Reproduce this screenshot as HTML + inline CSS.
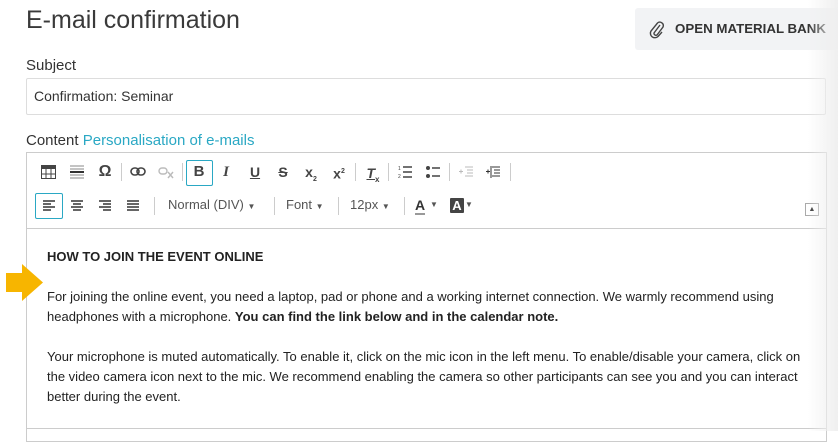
<!DOCTYPE html>
<html><head><meta charset="utf-8"><style>
*{margin:0;padding:0;box-sizing:border-box}
body{width:838px;height:431px;overflow:hidden;background:#fff;font-family:"Liberation Sans",sans-serif;color:#333;position:relative}
.a{position:absolute;white-space:nowrap}
.fade{position:absolute;right:0;top:0;width:30px;height:431px;background:linear-gradient(to right,rgba(240,240,240,0),#efefef);z-index:5}
.ic{position:absolute;font-size:14px;color:#444;text-align:center;width:22px;line-height:22px}
.sep{position:absolute;width:1px;height:18px;background:#ccc}
.c{font-family:"Liberation Sans",Arial,sans-serif;font-size:13px;color:#222;line-height:20px}
</style></head><body>
<div class="a" style="left:26px;top:6px;font-size:25px;color:#3a3a3a">E-mail confirmation</div>
<div class="a" style="left:635px;top:8px;width:203px;height:42px;background:#f2f3f5;border-radius:3px"></div>
<svg class="a" style="left:648px;top:20px" width="18" height="20" viewBox="0 0 18 20"><path d="M12 5 L6 13 a2 2 0 0 0 3 2 L15 7 a3.5 3.5 0 0 0 -5.5 -4 L3 11 a4.5 4.5 0 0 0 7 5.5 L14 12" fill="none" stroke="#444" stroke-width="1.4"/></svg>
<div class="a" style="left:675px;top:21px;font-size:13.3px;font-weight:bold;color:#333">OPEN MATERIAL BANK</div>
<div class="a" style="left:26px;top:57px;font-size:15px;color:#333">Subject</div>
<div class="a" style="left:26px;top:78px;width:800px;height:37px;border:1px solid #ddd;border-radius:2px"></div>
<div class="a" style="left:34px;top:88px;font-size:14px;color:#333">Confirmation: Seminar</div>
<div class="a" style="left:26px;top:132px;font-size:15px;color:#333">Content <span style="color:#2aa8c4">Personalisation of e-mails</span></div>
<div class="a" style="left:26px;top:152px;width:801px;height:290px;border:1px solid #ccc"></div>
<div class="a" style="left:27px;top:228px;width:799px;height:1px;background:#ccc"></div>
<div class="a" style="left:27px;top:428px;width:799px;height:1px;background:#ccc"></div>
<!-- row1 -->
<svg class="a" style="left:41px;top:165px" width="15" height="14"><rect x="0.5" y="0.5" width="14" height="13" fill="none" stroke="#444"/><rect x="0" y="0" width="15" height="4" fill="#444"/><path d="M5 4v10M10 4v10M0 9h15" stroke="#444"/></svg>
<svg class="a" style="left:70px;top:165px" width="14" height="15"><path d="M0 1h14M0 4h14M0 7h14M0 10h14M0 13h14" stroke="#888"/><path d="M0 7h14" stroke="#333" stroke-width="2"/></svg>
<div class="ic" style="left:94px;top:161px;font-size:16px;font-weight:bold">Ω</div>
<div class="sep" style="left:121px;top:163px"></div>
<svg class="a" style="left:130px;top:167px" width="16" height="9"><rect x="1" y="1" width="8" height="7" rx="3.5" fill="none" stroke="#444" stroke-width="1.6"/><rect x="7" y="1" width="8" height="7" rx="3.5" fill="none" stroke="#444" stroke-width="1.6"/></svg>
<svg class="a" style="left:158px;top:167px" width="16" height="12"><rect x="1" y="1" width="8" height="6" rx="3" fill="none" stroke="#bbb" stroke-width="1.4"/><path d="M10 5l5 6M15 5l-5 6" stroke="#bbb" stroke-width="1.4"/></svg>
<div class="sep" style="left:182px;top:163px"></div>
<div class="a" style="left:186px;top:160px;width:27px;height:26px;border:1px solid #2aa8c4;border-radius:2px"></div>
<div class="ic" style="left:188px;top:161px;font-weight:bold;font-size:15px">B</div>
<div class="ic" style="left:215px;top:161px;font-style:italic;font-weight:bold;font-size:15px;font-family:'Liberation Serif',serif">I</div>
<div class="ic" style="left:244px;top:161px;font-weight:bold;text-decoration:underline">U</div>
<div class="ic" style="left:272px;top:161px;font-weight:bold;text-decoration:line-through">S</div>
<div class="ic" style="left:300px;top:161px;font-weight:bold">x<sub style="font-size:7px">2</sub></div>
<div class="ic" style="left:328px;top:161px;font-weight:bold">x<sup style="font-size:7px">2</sup></div>
<div class="sep" style="left:355px;top:163px"></div>
<div class="ic" style="left:362px;top:162px;font-weight:bold;font-style:italic;text-decoration:underline">T<sub style="font-size:8px;font-style:normal">x</sub></div>
<div class="sep" style="left:388px;top:163px"></div>
<svg class="a" style="left:398px;top:165px" width="14" height="14"><path d="M5 2h9M5 7h9M5 12h9" stroke="#444" stroke-width="1.4"/><text x="0" y="5" font-size="5" fill="#444">1</text><text x="0" y="13" font-size="5" fill="#444">2</text></svg>
<svg class="a" style="left:426px;top:165px" width="14" height="14"><circle cx="2" cy="3" r="2" fill="#444"/><circle cx="2" cy="11" r="2" fill="#444"/><path d="M6 3h8M6 11h8" stroke="#444" stroke-width="1.4"/></svg>
<div class="sep" style="left:449px;top:163px"></div>
<svg class="a" style="left:459px;top:166px" width="14" height="12"><path d="M6 1h8M8 4h6M8 7h6M6 10h8M0 5.5h4M2 3.5v4" stroke="#bbb"/></svg>
<svg class="a" style="left:486px;top:166px" width="14" height="12"><path d="M6 1h8M8 4h6M8 7h6M6 10h8M0 5.5h4M2 3.5v4M5 0v12" stroke="#333"/></svg>
<div class="sep" style="left:510px;top:163px"></div>
<!-- row2 -->
<div class="a" style="left:35px;top:193px;width:28px;height:26px;border:1px solid #2aa8c4;border-radius:2px"></div>
<svg class="a" style="left:43px;top:200px" width="12" height="11"><path d="M0 1h12M0 4h8M0 7h12M0 10h8" stroke="#333" stroke-width="1.4"/></svg>
<svg class="a" style="left:71px;top:200px" width="12" height="11"><path d="M0 1h12M2 4h8M0 7h12M2 10h8" stroke="#333" stroke-width="1.4"/></svg>
<svg class="a" style="left:99px;top:200px" width="12" height="11"><path d="M0 1h12M4 4h8M0 7h12M4 10h8" stroke="#333" stroke-width="1.4"/></svg>
<svg class="a" style="left:127px;top:200px" width="12" height="11"><path d="M0 1h12M0 4h12M0 7h12M0 10h12" stroke="#333" stroke-width="1.4"/></svg>
<div class="sep" style="left:154px;top:197px"></div>
<div class="a" style="left:168px;top:197px;font-size:13px;color:#555">Normal (DIV) <span style="font-size:8px">▼</span></div>
<div class="sep" style="left:274px;top:197px"></div>
<div class="a" style="left:286px;top:197px;font-size:13px;color:#555">Font <span style="font-size:8px">▼</span></div>
<div class="sep" style="left:338px;top:197px"></div>
<div class="a" style="left:350px;top:197px;font-size:13px;color:#555">12px <span style="font-size:8px">▼</span></div>
<div class="sep" style="left:404px;top:197px"></div>
<div class="a" style="left:415px;top:197px;font-size:14px;font-weight:bold;color:#333;border-bottom:2px solid #999;line-height:16px">A</div>
<div class="a" style="left:430px;top:200px;font-size:8px;color:#555">▼</div>
<div class="a" style="left:450px;top:198px;width:14px;height:15px;background:#444;color:#fff;font-size:13px;font-weight:bold;text-align:center;line-height:15px;border-radius:1px">A</div>
<div class="a" style="left:465px;top:200px;font-size:8px;color:#555">▼</div>
<div class="a" style="left:805px;top:203px;width:14px;height:13px;border:1px solid #aaa;font-size:7px;text-align:center;line-height:12px;color:#333">▲</div>
<!-- content -->
<div class="a c" style="left:47px;top:247px;font-weight:bold">HOW TO JOIN THE EVENT ONLINE</div>
<div class="a c" style="left:47px;top:287px">For joining the online event, you need a laptop, pad or phone and a working internet connection. We warmly recommend using<br>headphones with a microphone. <b>You can find the link below and in the calendar note.</b></div>
<div class="a c" style="left:47px;top:347px">Your microphone is muted automatically. To enable it, click on the mic icon in the left menu. To enable/disable your camera, click on<br>the video camera icon next to the mic. We recommend enabling the camera so other participants can see you and you can interact<br>better during the event.</div>
<svg class="a" style="left:6px;top:264px" width="38" height="37"><path d="M0 9h16V0l21 18.5L16 37V28H0z" fill="#f7b500"/></svg>
<div class="fade"></div>
</body></html>
